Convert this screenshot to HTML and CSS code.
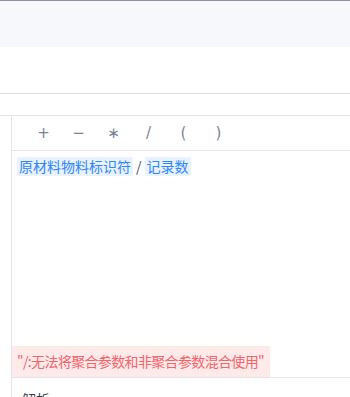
FILE: index.html
```html
<!DOCTYPE html>
<html lang="zh">
<head>
<meta charset="utf-8">
<link rel="stylesheet" href="styles.css">
</head>
<body>
<div class="topbar"></div>
<div class="blank"></div>
<div class="gap"></div>
<div class="main">
  <div class="panel">
    <div class="ops">
      <span class="op">+</span>
      <span class="op">−</span>
      <span class="op">∗</span>
      <span class="op">/</span>
      <span class="op">(</span>
      <span class="op">)</span>
    </div>
    <div class="expr">
      <span class="tag">原材料物料标识符</span><span class="slash">/</span><span class="tag">记录数</span>
    </div>
    <div class="error">"/:无法将聚合参数和非聚合参数混合使用"</div>
    <div class="section">解析</div>
  </div>
</div>
</body>
</html>
```

FILE: styles.css
```css
html, body {
  margin: 0;
  padding: 0;
  background: #ffffff;
  font-family: "Noto Sans CJK SC", "Noto Sans", sans-serif;
  overflow: hidden;
}
.topbar {
  height: 46px;
  border-top: 1px solid #8a93a5;
  background: #f7f8fc;
}
.blank {
  height: 46px;
  border-bottom: 1px solid #dcdde5;
}
.gap {
  height: 21px;
  border-bottom: 1px solid #e3e4ec;
}
.main {
  padding-left: 11px;
}
.panel {
  border-left: 1px solid #e3e4ec;
  height: 300px;
}
.ops {
  height: 34px;
  display: flex;
  align-items: center;
  padding-left: 14px;
  border-bottom: 1px solid #e3e4ec;
}
.op {
  width: 35px;
  text-align: center;
  font-family: "DejaVu Sans", sans-serif;
  font-size: 15px;
  color: #7b8494;
  line-height: 20px;
}
.expr {
  height: 189px;
  padding: 6px 0 0 5px;
  font-size: 14px;
  line-height: 19px;
}
.tag {
  display: inline-block;
  background: #e9f2ff;
  color: #2f86f6;
  border-radius: 2px;
  padding: 0 2px;
  line-height: 19px;
}
.slash {
  color: #4a4f5a;
  padding: 0 3px;
}
.error {
  display: inline-block;
  height: 31px;
  line-height: 31px;
  padding: 0 6px 0 5px;
  background: #ffeaea;
  color: #f0646a;
  font-size: 14px;
  letter-spacing: -0.65px;
}
.section {
  border-top: 1px solid #e3e4ec;
  padding: 11px 0 0 10px;
  font-size: 14px;
  color: #333842;
  line-height: 20px;
}
```
